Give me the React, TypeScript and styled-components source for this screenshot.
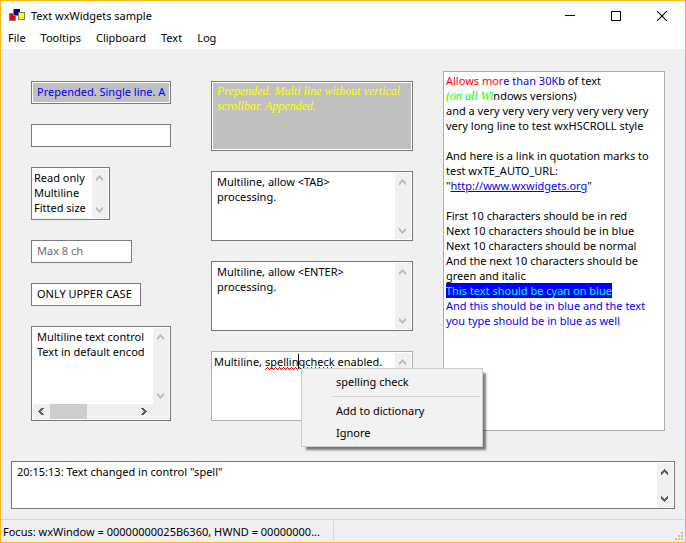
import React from 'react';
import styled, { createGlobalStyle, css } from 'styled-components';

const FACE = '#f0f0f0';
const SANS = '"Noto Sans", "Open Sans", sans-serif';
const SERIF = '"Liberation Serif", serif';

const GlobalStyle = createGlobalStyle`
  * { box-sizing: border-box; }
  html, body, #root { height: 100%; }
  body { margin: 0; font: 11px/15px ${SANS}; color: #000; }
  button, input, textarea { font: inherit; color: inherit; margin: 0; padding: 0; border: 0; background: none; }
`;

const Window = styled.div`
  display: flex;
  flex-direction: column;
  min-height: 100%;
  border: 1px solid #fdb916;
  background: ${FACE};
`;

const TitleBar = styled.header`
  display: flex;
  align-items: center;
  height: 29px;
  padding-left: 8px;
  background: #fff;
`;

const Title = styled.h1`
  flex: 1;
  margin: 0 0 0 6px;
  font: inherit;
`;

const CaptionButton = styled.button`
  display: grid;
  place-items: center;
  width: 46px;
  height: 28px;
`;

const MenuBar = styled.nav`
  display: flex;
  gap: 1px;
  height: 19px;
  background: #fff;
`;

const MenuBarItem = styled.button`
  && {
    height: 19px;
    padding: 0 7px 4px;
    line-height: 15px;
  }
`;

const Panel = styled.main`
  flex: 1;
  display: flex;
  flex-direction: column;
  gap: 30px;
  padding: 22px 10px 10px;
`;

const Columns = styled.div`
  flex: 1;
  display: flex;
  padding: 0 10px 0 20px;
`;

const Column = styled.div`
  flex: none;
  display: flex;
  flex-direction: column;
  align-items: flex-start;
  gap: 20px;
  padding: 10px 0;

  & + & { margin-left: 40px; }
`;

const frame = css`
  border: 1px solid #7a7a7a;
  background: #fff;
`;

const Field = styled.input<{ $w: number; $tone?: 'blue' | 'dim' }>`
  && {
    ${frame}
    width: ${(p) => p.$w}px;
    height: 23px;
    padding: 0 0 2px 5px;
    outline: none;
    ${(p) => p.$tone === 'dim' && 'color: #6d6d6d;'}
    ${(p) =>
      p.$tone === 'blue' &&
      'color: #00f; background: #c0c0c0; box-shadow: inset 0 0 0 1px #fff;'}
  }
`;

const Box = styled.div<{ $w?: number; $h: number; $light?: boolean }>`
  ${frame}
  ${(p) => p.$light && 'border-color: #abadb3;'}
  position: relative;
  display: flex;
  width: ${(p) => (p.$w ? `${p.$w}px` : '100%')};
  height: ${(p) => p.$h}px;
  padding: 1px;
`;

const Stack = styled.div`
  flex: 1;
  display: flex;
  flex-direction: column;
  min-width: 0;
`;

const Area = styled.textarea<{ $indent?: number; $serif?: boolean }>`
  && {
    flex: 1;
    min-width: 0;
    min-height: 0;
    padding: 1px 0 0 ${(p) => p.$indent ?? 4}px;
    resize: none;
    outline: none;
    overflow: hidden;
    white-space: pre;
    ${(p) => p.$serif && `font: italic 12px/15px ${SERIF}; color: #ff0; background: #c0c0c0;`}
  }
`;

const Bar = styled.div<{ $row?: boolean; $corner?: boolean }>`
  display: flex;
  flex: none;
  flex-direction: ${(p) => (p.$row ? 'row' : 'column')};
  ${(p) => (p.$row ? 'height: 15px;' : 'width: 16px;')}
  ${(p) => p.$corner && 'padding-bottom: 15px;'}
  background: ${FACE};
`;

const Track = styled.div`
  flex: 1;
  display: flex;
`;

const Thumb = styled.div`
  width: 37px;
  background: #cdcdcd;
`;

const Arrow = styled.button<{ $on?: boolean; $row?: boolean; $flip?: boolean }>`
  && {
    display: grid;
    place-items: center;
    width: ${(p) => (p.$row ? 17 : 16)}px;
    height: ${(p) => (p.$row ? 15 : 17)}px;
    padding: ${(p) => (p.$row ? '0 1px 0 0' : '1px 1px 0 0')};
    color: ${(p) => (p.$on ? '#606060' : '#bfbfbf')};
  }
  svg { transform: rotate(${(p) => (p.$flip ? 180 : 0)}deg); }
`;

const Rich = styled.div`
  flex: 1;
  padding: 1px 0 0 1px;
  outline: none;
  white-space: pre;
  overflow: hidden;
`;

const RichBox = styled(Box)`
  flex: 1;
  min-width: 0;
  margin-left: 30px;
  padding: 0 1px;
`;

const Ink = styled.span<{ $c: string; $bg?: string }>`
  color: ${(p) => p.$c};
  background: ${(p) => p.$bg ?? 'none'};
`;

const Slanted = styled(Ink)`
  font: italic 12px/14px ${SERIF};
`;

const Link = styled.a`
  color: #00f;
  text-decoration: underline;
`;

const squiggle = encodeURIComponent(
  '<svg xmlns="http://www.w3.org/2000/svg" width="4" height="3" shape-rendering="crispEdges"><path fill="#e00000" d="M0 2h1v1H0zM1 1h1v1H1zM2 0h1v1H2zM3 1h1v1H3z"/></svg>',
);

const Misspelt = styled.span`
  padding-bottom: 1px;
  background: url("data:image/svg+xml,${squiggle}") repeat-x left bottom;
`;

const Caret = styled.span`
  display: inline-block;
  width: 1px;
  height: 15px;
  margin-right: -1px;
  background: #000;
  vertical-align: top;
`;

const ContextMenu = styled.div`
  position: absolute;
  z-index: 2;
  top: 16px;
  left: 89px;
  width: 182px;
  padding: 2px;
  border: 1px solid #ccc;
  background: #f2f2f2;
  box-shadow: 4px 4px 2px -1px rgba(0, 0, 0, 0.5);
`;

const ContextItem = styled.button`
  && {
    display: block;
    width: 100%;
    height: 22px;
    padding: 0 0 1px 32px;
    text-align: left;
  }
`;

const Separator = styled.hr`
  margin: 3px 0 3px 28px;
  border: 0;
  border-top: 1px solid #d7d7d7;
`;

const StatusBar = styled.footer`
  display: flex;
  height: 23px;
  border-top: 1px solid #d7d7d7;
`;

const StatusCell = styled.div`
  width: 333px;
  margin: 1px 0;
  padding: 3px 0 0 2px;
  border-right: 1px solid #d7d7d7;
  white-space: nowrap;
`;

const Grip = styled.svg`
  margin: auto 2px 2px auto;
`;

const UpChevron = () => (
  <svg width="7" height="6" viewBox="0 0 7 6" shapeRendering="crispEdges" fill="currentColor">
    <path d="M3 0h1v1h1v1h1v1h1v3H6V5H5V4H4V3H3v1H2v1H1v1H0V3h1V2h1V1h1z" />
  </svg>
);

const LeftChevron = () => (
  <svg width="6" height="7" viewBox="0 0 6 7" shapeRendering="crispEdges" fill="currentColor">
    <path d="M0 3v1h1v1h1v1h1v1h3V6H5V5H4V4H3V3h1V2h1V1h1V0H3v1H2v1H1v1z" />
  </svg>
);

const VScroll = ({ on, corner }: { on?: boolean; corner?: boolean }) => (
  <Bar $corner={corner}>
    <Arrow type="button" aria-label="Scroll up" $on={on}><UpChevron /></Arrow>
    <Track />
    <Arrow type="button" aria-label="Scroll down" $flip $on={on}><UpChevron /></Arrow>
  </Bar>
);

const HScroll = () => (
  <Bar $row>
    <Arrow type="button" aria-label="Scroll left" $row $on><LeftChevron /></Arrow>
    <Track><Thumb /></Track>
    <Arrow type="button" aria-label="Scroll right" $row $flip $on><LeftChevron /></Arrow>
  </Bar>
);

const Logo = () => (
  <svg width="16" height="13" viewBox="0 0 16 13" shapeRendering="crispEdges" aria-hidden="true">
    <path fill="#808080" d="M0 4h7v8H0z" />
    <path fill="#f00000" d="M1 5h5v6H1z" />
    <path fill="#808080" d="M4 0h7v7H4z" />
    <path fill="#000080" d="M5 0h6v6H5z" />
    <path fill="#808080" d="M9 3h7v8H9z" />
    <path fill="#ff0" d="M10 4h5v6h-5z" />
  </svg>
);

export default function App() {
  return (
    <>
      <GlobalStyle />
      <Window>
        <TitleBar>
          <Logo />
          <Title>Text wxWidgets sample</Title>
          <CaptionButton type="button" aria-label="Minimize">
            <svg width="10" height="10" shapeRendering="crispEdges"><path d="M0 4h10v1H0z" /></svg>
          </CaptionButton>
          <CaptionButton type="button" aria-label="Maximize">
            <svg width="10" height="10" fill="none" stroke="#000"><path d="M.5.5h9v9h-9z" /></svg>
          </CaptionButton>
          <CaptionButton type="button" aria-label="Close">
            <svg width="10" height="10" stroke="#000" strokeWidth="1.1"><path d="M0 0l10 10M10 0L0 10" /></svg>
          </CaptionButton>
        </TitleBar>
        <MenuBar>
          {['File', 'Tooltips', 'Clipboard', 'Text', 'Log'].map((m) => (
            <MenuBarItem type="button" key={m}>{m}</MenuBarItem>
          ))}
        </MenuBar>
        <Panel>
          <Columns>
            <Column>
              <Field $w={140} $tone="blue" aria-label="Single line" defaultValue="Prepended. Single line. A" />
              <Field $w={140} aria-label="Password" />
              <Box $w={79} $h={53}>
                <Area $indent={1} readOnly aria-label="Read only" defaultValue={'Read only\nMultiline\nFitted size'} />
                <VScroll />
              </Box>
              <Field $w={101} $tone="dim" aria-label="Limited length" defaultValue="Max 8 ch" />
              <Field $w={110} aria-label="Upper case" defaultValue="ONLY UPPER CASE" />
              <Box $w={140} $h={95}>
                <Stack>
                  <Area aria-label="Horizontal scroll" defaultValue={'Multiline text control\nText in default encod'} />
                  <HScroll />
                </Stack>
                <VScroll corner />
              </Box>
            </Column>
            <Column>
              <Box $w={202} $h={70}>
                <Area $serif aria-label="Multi line" defaultValue={'Prepended. Multi line without vertical\nscrollbar. Appended.'} />
              </Box>
              <Box $w={202} $h={70}>
                <Area aria-label="Tab processing" defaultValue={'Multiline, allow <TAB>\nprocessing.'} />
                <VScroll />
              </Box>
              <Box $w={202} $h={70}>
                <Area aria-label="Enter processing" defaultValue={'Multiline, allow <ENTER>\nprocessing.'} />
                <VScroll />
              </Box>
              <Box $w={202} $h={70} $light>
                <Rich role="textbox" aria-label="Spelling" contentEditable suppressContentEditableWarning spellCheck={false}>
                  Multiline, <Misspelt>spellin<Caret />gcheck</Misspelt> enabled.
                </Rich>
                <VScroll />
                <ContextMenu role="menu">
                  <ContextItem type="button" role="menuitem">spelling check</ContextItem>
                  <Separator />
                  <ContextItem type="button" role="menuitem">Add to dictionary</ContextItem>
                  <ContextItem type="button" role="menuitem">Ignore</ContextItem>
                </ContextMenu>
              </Box>
            </Column>
            <RichBox $h={360} $light>
              <Rich role="textbox" aria-label="Rich text" contentEditable suppressContentEditableWarning spellCheck={false}>
                <Ink $c="#f00">Allows mor</Ink><Ink $c="#00f">e than 30K</Ink>{'b of text\n'}
                <Slanted $c="#0f0">(on all Wi</Slanted>
                {'ndows versions)\nand a very very very very very very very\nvery long line to test wxHSCROLL style\n\nAnd here is a link in quotation marks to\ntest wxTE_AUTO_URL:\n"'}
                <Link href="http://www.wxwidgets.org">http://www.wxwidgets.org</Link>
                {'"\n\nFirst 10 characters should be in red\nNext 10 characters should be in blue\nNext 10 characters should be normal\nAnd the next 10 characters should be\ngreen and italic\n'}
                <Ink $c="#0ff" $bg="#00f">This text should be cyan on blue</Ink>{'\n'}
                <Ink $c="#00f">{'And this should be in blue and the text\nyou type should be in blue as well'}</Ink>
              </Rich>
            </RichBox>
          </Columns>
          <Box $h={48}>
            <Area readOnly aria-label="Log" defaultValue={'20:15:13: Text changed in control "spell"'} />
            <VScroll on />
          </Box>
        </Panel>
        <StatusBar>
          <StatusCell>Focus: wxWindow = 00000000025B6360, HWND = 00000000...</StatusCell>
          <Grip width="8" height="8" fill="#bfbfbf" shapeRendering="crispEdges">
            <path d="M6 0h2v2H6zM3 3h2v2H3zM6 3h2v2H6zM0 6h2v2H0zM3 6h2v2H3zM6 6h2v2H6z" />
          </Grip>
        </StatusBar>
      </Window>
    </>
  );
}
